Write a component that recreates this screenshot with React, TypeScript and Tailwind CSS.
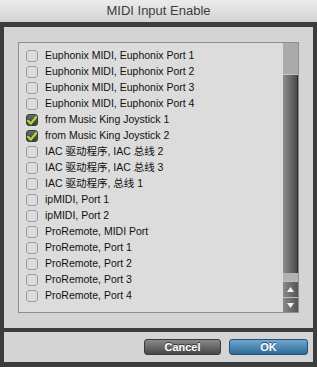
const ports: { label: string; checked?: boolean }[] = [
  { label: 'Euphonix MIDI, Euphonix Port 1' },
  { label: 'Euphonix MIDI, Euphonix Port 2' },
  { label: 'Euphonix MIDI, Euphonix Port 3' },
  { label: 'Euphonix MIDI, Euphonix Port 4' },
  { label: 'from Music King Joystick 1', checked: true },
  { label: 'from Music King Joystick 2', checked: true },
  { label: 'IAC 驱动程序, IAC 总线 2' },
  { label: 'IAC 驱动程序, IAC 总线 3' },
  { label: 'IAC 驱动程序, 总线 1' },
  { label: 'ipMIDI, Port 1' },
  { label: 'ipMIDI, Port 2' },
  { label: 'ProRemote, MIDI Port' },
  { label: 'ProRemote, Port 1' },
  { label: 'ProRemote, Port 2' },
  { label: 'ProRemote, Port 3' },
  { label: 'ProRemote, Port 4' },
];

function Checkbox({ checked }: { checked?: boolean }) {
  if (checked) {
    return (
      <div className="w-[12px] h-[12px] rounded-[3px] bg-gradient-to-b from-[#6a6a6a] to-[#3e3e3e] border border-[#3a3a3a] flex items-center justify-center shrink-0">
        <svg width="10" height="9" viewBox="0 0 10 9">
          <path d="M1 4.8 L3.8 7.6 L9 1.2" fill="none" stroke="#a6e22e" strokeWidth="2.2" strokeLinecap="round" strokeLinejoin="round" />
        </svg>
      </div>
    );
  }
  return <div className="w-[12px] h-[12px] rounded-[3px] bg-[#dcdcdc] border border-[#9c9c9c] shrink-0" />;
}

export default function App() {
  return (
    <div className="w-[317px] h-[367px] flex flex-col bg-[#3c3c3c] font-['Liberation_Sans','Noto_Sans_CJK_SC',sans-serif]">
      <div className="h-[22px] shrink-0 bg-gradient-to-b from-[#ebebeb] to-[#d3d3d3] flex items-center justify-center text-[13px] text-[#3e3e3e]">
        MIDI Input Enable
      </div>
      <div className="flex flex-col pt-[5px] pl-[4px] pr-[4px] gap-[4px]">
        <div className="h-[301px] bg-[#d4d4d4] pt-[15px] pl-[14px]">
          <div className="w-[281px] h-[271px] border border-[#8e8e8e] bg-[#dcdcdc] flex">
            <div className="flex-1 flex flex-col pt-[5px] pl-[7px]">
              {ports.map((p) => (
                <div key={p.label} className="h-[16px] flex items-center gap-[7px] text-[10.5px] text-[#111] whitespace-nowrap">
                  <Checkbox checked={p.checked} />
                  <span>{p.label}</span>
                </div>
              ))}
            </div>
            <div className="w-[15px] flex flex-col">
              <div className="h-[32px] bg-[#aaaaaa] border-b border-[#c4c4c4]" />
              <div className="h-[198px] bg-gradient-to-r from-[#8e8e8e] via-[#6c6c6c] to-[#4a4a4a] border-r border-[#2e2e2e]" />
              <div className="h-[8px] bg-[#b2b2b2]" />
              <div className="h-[16px] bg-gradient-to-r from-[#8a8a8a] to-[#555] border-t border-[#bdbdbd] flex items-center justify-center">
                <svg width="7" height="5" viewBox="0 0 7 5"><path d="M3.5 0 L7 5 L0 5 Z" fill="#f2f2f2" /></svg>
              </div>
              <div className="flex-1 bg-gradient-to-r from-[#8a8a8a] to-[#555] border-t border-[#bdbdbd] flex items-center justify-center">
                <svg width="7" height="5" viewBox="0 0 7 5"><path d="M0 0 L7 0 L3.5 5 Z" fill="#f2f2f2" /></svg>
              </div>
            </div>
          </div>
        </div>
        <div className="h-[30px] bg-[#d4d4d4] flex justify-end items-start pt-[7px] pr-[5px] gap-[8px]">
          <button className="w-[77px] h-[16px] rounded-[3px] border border-[#3a3a3a] bg-gradient-to-b from-[#8a8a8a] to-[#484848] text-white text-[11px] font-bold leading-none [text-shadow:0_-1px_0_#333]">
            Cancel
          </button>
          <button className="w-[79px] h-[16px] rounded-[3px] border border-[#2a4f6e] bg-gradient-to-b from-[#6ea8d2] to-[#2f6b98] text-white text-[11px] font-bold leading-none [text-shadow:0_-1px_0_#28506f]">
            OK
          </button>
        </div>
      </div>
    </div>
  );
}
